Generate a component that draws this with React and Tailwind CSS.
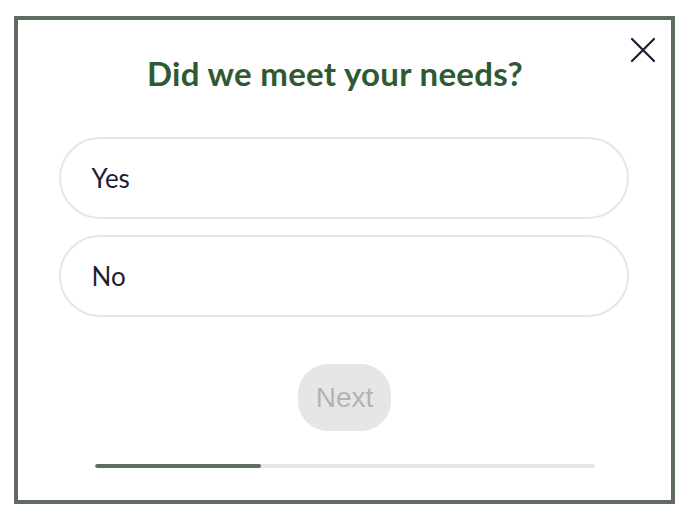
import React, { useState } from 'react';

export default function App() {
    const [choice, setChoice] = useState(null);
    const options = ['Yes', 'No'];

    return (
        <div className="w-[690px] h-[518px] bg-white pt-[16px] pl-[14px]">
            <div className="relative w-[661px] h-[488px] border-4 border-[#5f6d61] bg-white flex flex-col items-center" style={{ fontFamily: 'Lato, "Open Sans", sans-serif' }}>
                <button className="absolute top-[16px] right-[14px] w-[28px] h-[28px] flex items-center justify-center text-[#1c1c33]">
                    <svg width="26" height="26" viewBox="0 0 26 26" fill="none" stroke="currentColor" strokeWidth="2.2" strokeLinecap="round">
                        <path d="M2 2 L24 24 M24 2 L2 24" />
                    </svg>
                </button>

                <h2 className="mt-[34px] mr-[19px] text-[33px] leading-[38px] font-bold tracking-[0.3px] text-[#2e5933]">Did we meet your needs?</h2>

                <div className="mt-[45px] mr-[2px] w-[570px] flex flex-col gap-[16px]">
                    {options.map(o => (
                        <button
                            key={o}
                            onClick={() => setChoice(o)}
                            className="h-[82px] w-full rounded-full border-2 border-[#e6e6e6] bg-white text-left pl-[31px] text-[26px] text-[#1e1e30]"
                        >
                            {o}
                        </button>
                    ))}
                </div>

                <button
                    disabled={!choice}
                    className="mt-[47px] h-[67px] w-[93px] rounded-[30px] bg-[#e6e6e6] text-[#b3b3b3] text-[28px]"
                    style={{ fontFamily: '"Liberation Sans", Arial, sans-serif' }}
                >
                    Next
                </button>

                <div className="mt-[33px] w-[500px] h-[4px] rounded-full bg-[#e6e6e6] overflow-hidden">
                    <div className="h-full w-1/3 rounded-full bg-[#5f6d61]" />
                </div>
            </div>
        </div>
    );
}
